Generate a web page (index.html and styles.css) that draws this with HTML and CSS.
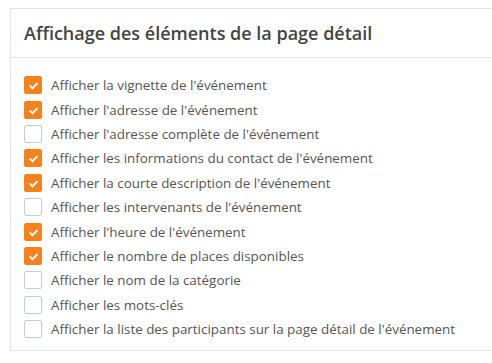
FILE: index.html
```html
<!DOCTYPE html>
<html lang="fr">
<head>
    <meta charset="UTF-8">
    <title>Affichage des éléments de la page détail</title>
    <link rel="stylesheet" href="styles.css">
</head>
<body>
    <div class="card">
        <div class="card-header">
            <h2>Affichage des éléments de la page détail</h2>
        </div>
        <div class="card-body">
            <label class="option"><span class="box checked"></span>Afficher la vignette de l'événement</label>
            <label class="option"><span class="box checked"></span>Afficher l'adresse de l'événement</label>
            <label class="option"><span class="box"></span>Afficher l'adresse complète de l'événement</label>
            <label class="option"><span class="box checked"></span>Afficher les informations du contact de l'événement</label>
            <label class="option"><span class="box checked"></span>Afficher la courte description de l'événement</label>
            <label class="option"><span class="box"></span>Afficher les intervenants de l'événement</label>
            <label class="option"><span class="box checked"></span>Afficher l'heure de l'événement</label>
            <label class="option"><span class="box checked"></span>Afficher le nombre de places disponibles</label>
            <label class="option"><span class="box"></span>Afficher le nom de la catégorie</label>
            <label class="option"><span class="box"></span>Afficher les mots-clés</label>
            <label class="option"><span class="box"></span>Afficher la liste des participants sur la page détail de l'événement</label>
        </div>
    </div>
</body>
</html>
```

FILE: styles.css
```css
/* Fondations */
body {
    margin: 0;
    background: #fff;
    font-family: "Open Sans", "Noto Sans", sans-serif;
    color: #555;
    overflow: hidden;
}

/* Carte (le bord droit sort du cadre) */
.card {
    margin: 8px 0 0 10px;
    border: 1px solid #e3e3e3;
    border-right: none;
    background: #fff;
}

.card-header {
    height: 48px;
    display: flex;
    align-items: center;
    padding: 0 13px;
    border-bottom: 1px solid #e3e3e3;
}

.card-header h2 {
    margin: 0;
    font-size: 18px;
    font-weight: 600;
    color: #444;
}

.card-body {
    display: flex;
    flex-direction: column;
    padding: 15px 13px 9px;
}

/* Cases a cocher */
.option {
    display: flex;
    align-items: center;
    gap: 9px;
    height: 24.4px;
    font-size: 13.4px;
    white-space: nowrap;
}

.box {
    width: 16px;
    height: 16px;
    border: 1px solid #c5ccd6;
    border-radius: 2px;
    background: #fff;
    flex: none;
    position: relative;
}

.box.checked {
    background: #f7821b;
    border-color: #f7821b;
}

.box.checked::after {
    content: "";
    position: absolute;
    left: 6px;
    top: 4px;
    width: 3px;
    height: 6px;
    border: solid #fff;
    border-width: 0 2px 2px 0;
    transform: rotate(45deg);
}
```
